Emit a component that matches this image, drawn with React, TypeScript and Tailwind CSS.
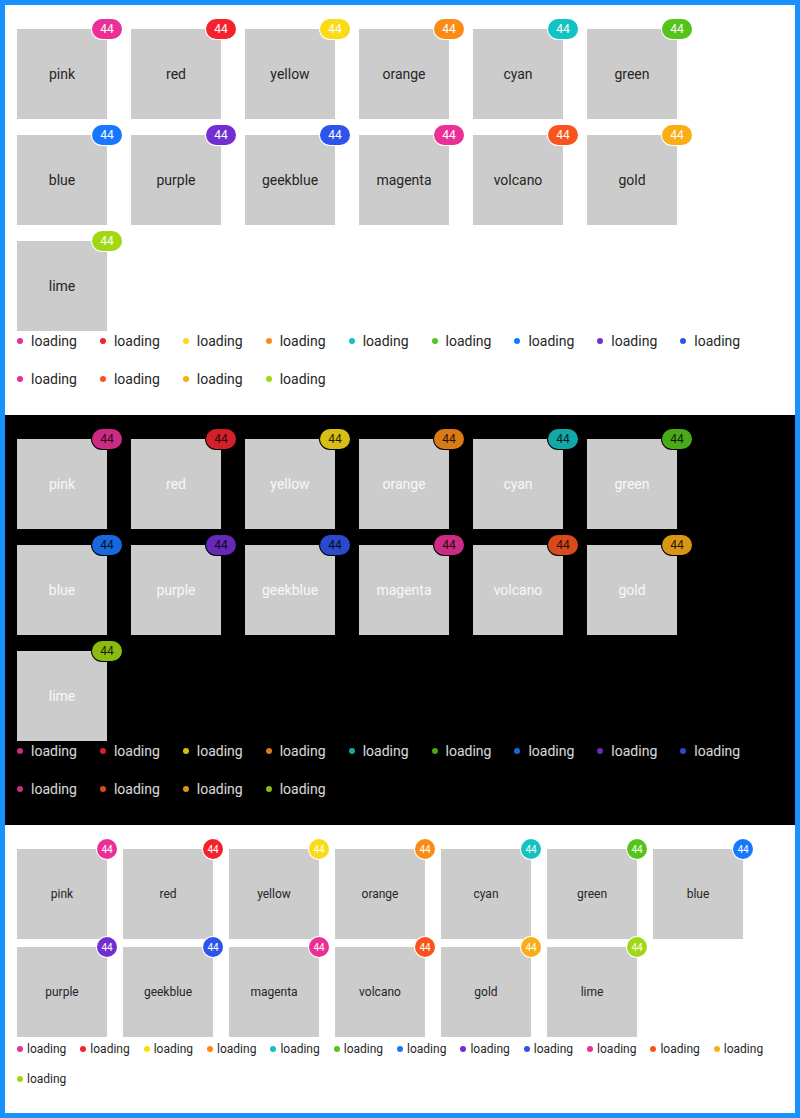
import React from "react";

type Preset = { name: string; light: string; dark: string };

const PRESETS: Preset[] = [
  { name: "pink", light: "bg-[#eb2f96]", dark: "bg-[#cb2b83]" },
  { name: "red", light: "bg-[#f5222d]", dark: "bg-[#d32029]" },
  { name: "yellow", light: "bg-[#fadb14]", dark: "bg-[#d8bd14]" },
  { name: "orange", light: "bg-[#fa8c16]", dark: "bg-[#d87a16]" },
  { name: "cyan", light: "bg-[#13c2c2]", dark: "bg-[#13a8a8]" },
  { name: "green", light: "bg-[#52c41a]", dark: "bg-[#49aa19]" },
  { name: "blue", light: "bg-[#1677ff]", dark: "bg-[#1668dc]" },
  { name: "purple", light: "bg-[#722ed1]", dark: "bg-[#642ab5]" },
  { name: "geekblue", light: "bg-[#2f54eb]", dark: "bg-[#2b4acb]" },
  { name: "magenta", light: "bg-[#eb2f96]", dark: "bg-[#cb2b83]" },
  { name: "volcano", light: "bg-[#fa541c]", dark: "bg-[#d84a1b]" },
  { name: "gold", light: "bg-[#faad14]", dark: "bg-[#d89614]" },
  { name: "lime", light: "bg-[#a0d911]", dark: "bg-[#8bbb11]" },
];

function BigSection({ dark }: { dark: boolean }) {
  return (
    <div className={`px-3 pt-6 pb-[26px] ${dark ? "bg-black" : "bg-white"}`}>
      {/* badge boxes */}
      <div className="flex flex-wrap gap-x-6 gap-y-4">
        {PRESETS.map((p) => (
          <div key={p.name} className="relative">
            <div
              className={`w-[90px] h-[90px] bg-[#cccccc] flex items-center justify-center text-sm ${
                dark ? "text-white/85" : "text-[#262626]"
              }`}
            >
              {p.name}
            </div>
            <span
              className={`absolute top-0 right-0 translate-x-1/2 -translate-y-1/2 w-[30px] h-5 rounded-full flex items-center justify-center text-xs ring-1 ${
                dark ? `${p.dark} text-black/85 ring-black` : `${p.light} text-white ring-white`
              }`}
            >
              44
            </span>
          </div>
        ))}
      </div>

      {/* status dots */}
      <div className="flex flex-wrap gap-x-[23px] gap-y-[18px]">
        {PRESETS.map((p) => (
          <div key={p.name} className="flex items-center gap-2 text-sm leading-5">
            <span className={`w-1.5 h-1.5 rounded-full ${dark ? p.dark : p.light}`} />
            <span className={dark ? "text-white/85" : "text-[#262626]"}>loading</span>
          </div>
        ))}
      </div>
    </div>
  );
}

function SmallSection() {
  return (
    <div className="px-3 pt-6 pb-6 bg-white">
      <div className="flex flex-wrap gap-x-4 gap-y-2">
        {PRESETS.map((p) => (
          <div key={p.name} className="relative">
            <div className="w-[90px] h-[90px] bg-[#cccccc] flex items-center justify-center text-xs text-[#262626]">
              {p.name}
            </div>
            <span
              className={`absolute top-0 right-0 translate-x-1/2 -translate-y-1/2 w-5 h-5 rounded-full flex items-center justify-center text-[10px] text-white ring-1 ring-white ${p.light}`}
            >
              44
            </span>
          </div>
        ))}
      </div>

      <div className="mt-[2px] flex flex-wrap gap-x-[14px] gap-y-[10px]">
        {PRESETS.map((p) => (
          <div key={p.name} className="flex items-center gap-1 text-xs leading-5">
            <span className={`w-1.5 h-1.5 rounded-full ${p.light}`} />
            <span className="text-[#262626]">loading</span>
          </div>
        ))}
      </div>
    </div>
  );
}

export default function App() {
  return (
    <div className="w-[800px] min-h-[1118px] border-[5px] border-[#1890ff] bg-white font-['Roboto',sans-serif]">
      <BigSection dark={false} />
      <BigSection dark={true} />
      <SmallSection />
    </div>
  );
}
